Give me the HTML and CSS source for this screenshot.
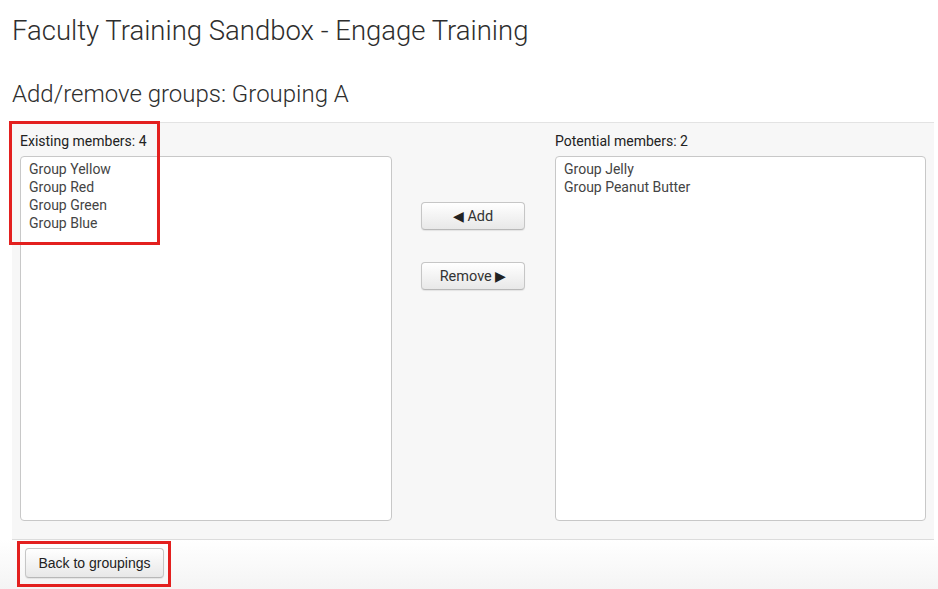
FILE: index.html
```html
<!DOCTYPE html>
<html>
<head>
<meta charset="utf-8">
<link rel="stylesheet" href="styles.css">
</head>
<body>
<div class="page">
  <h1 class="title">Faculty Training Sandbox - Engage Training</h1>
  <h2 class="subtitle">Add/remove groups: Grouping A</h2>
  <div class="panel">
    <div class="col col-left">
      <div class="label">Existing members: 4</div>
      <div class="listbox">
        <div class="item">Group Yellow</div>
        <div class="item">Group Red</div>
        <div class="item">Group Green</div>
        <div class="item">Group Blue</div>
      </div>
    </div>
    <div class="mid">
      <button class="btn btn-move"><span class="tri">&#9664;</span> Add</button>
      <button class="btn btn-move">Remove <span class="tri">&#9654;</span></button>
    </div>
    <div class="col col-right">
      <div class="label">Potential members: 2</div>
      <div class="listbox">
        <div class="item">Group Jelly</div>
        <div class="item">Group Peanut Butter</div>
      </div>
    </div>
  </div>
  <div class="footer">
    <button class="btn btn-back">Back to groupings</button>
  </div>
</div>
<div class="highlight hl-one"></div>
<div class="highlight hl-two"></div>
</body>
</html>
```
FILE: styles.css
```css
html, body {
  margin: 0;
  padding: 0;
  background: #fff;
}
body {
  font-family: Roboto, "Liberation Sans", sans-serif;
  color: #333;
  position: relative;
  min-height: 589px;
  overflow: hidden;
}
.page {
  padding-left: 12px;
  padding-right: 4px;
}
.title {
  margin: 0;
  padding-top: 13px;
  font-size: 27.5px;
  font-weight: 300;
  line-height: 36px;
  color: #2e2e2e;
}
.subtitle {
  margin: 0;
  padding-top: 30px;
  font-size: 24px;
  font-weight: 300;
  line-height: 30px;
  color: #2e2e2e;
  height: 43px;
}
.panel {
  display: flex;
  background: #f7f7f7;
  border-top: 1px solid #e3e3e3;
  border-bottom: 1px solid #dcdcdc;
  padding: 9px 8px 18px 8px;
}
.col {
  display: flex;
  flex-direction: column;
  flex-shrink: 0;
}
.col-left {
  width: 372px;
}
.col-right {
  width: 371px;
}
.label {
  font-size: 14px;
  line-height: 19px;
  color: #222;
  margin-bottom: 5px;
}
.listbox {
  height: 359px;
  background: #fff;
  border: 1px solid #c8c8c8;
  border-radius: 4px;
  padding: 3px 8px 1px;
}
.item {
  font-size: 14px;
  line-height: 18px;
  color: #444;
}
.mid {
  width: 163px;
  flex-shrink: 0;
  display: flex;
  flex-direction: column;
  align-items: center;
  padding-top: 70px;
  padding-right: 1px;
  box-sizing: border-box;
  gap: 32px;
}
.btn {
  font-family: Roboto, "Liberation Sans", sans-serif;
  font-size: 14px;
  color: #333;
  background: linear-gradient(#ffffff, #e8e8e8);
  border: 1px solid #c6c6c6;
  border-bottom-color: #b8b8b8;
  border-radius: 4px;
  box-shadow: 0 1px 1px rgba(0,0,0,0.08);
  padding: 0;
  cursor: pointer;
}
.btn-move {
  width: 104px;
  height: 28px;
  font-size: 14.5px;
}
.tri {
  font-size: 14px;
  color: #222;
}
.footer {
  margin-left: -12px;
  margin-right: -4px;
  padding: 8px 0 20px 25px;
  background: linear-gradient(#ffffff, #f0f0f0);
  height: 40px;
}
.btn-back {
  font-family: "Liberation Sans", Arial, sans-serif;
  font-size: 14px;
  width: 139px;
  height: 30px;
  color: #222;
}
.highlight {
  position: absolute;
  border: 3px solid #e3201f;
  box-sizing: border-box;
  pointer-events: none;
}
.hl-one {
  left: 9px;
  top: 121px;
  width: 151px;
  height: 124px;
}
.hl-two {
  left: 17px;
  top: 541px;
  width: 154px;
  height: 46px;
}
```
